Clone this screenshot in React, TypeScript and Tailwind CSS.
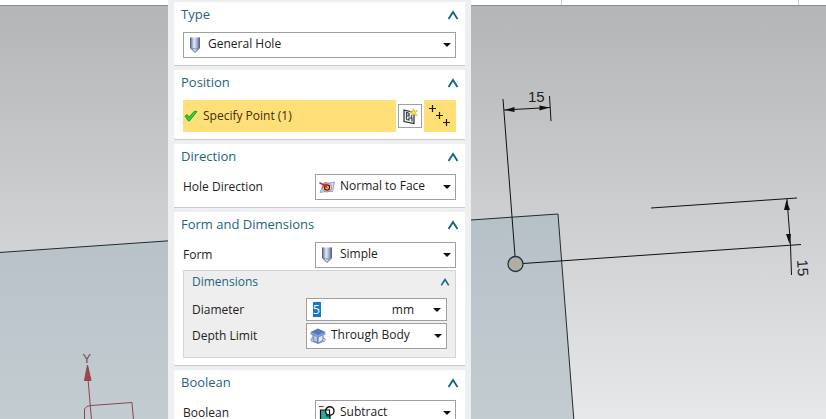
import type { ReactNode } from "react";

type IconProps = { className?: string };

function HoleIcon() {
  return (
    <svg width="16" height="18" viewBox="0 0 16 18">
      <defs>
        <linearGradient id="hole" x1="0" x2="1" y1="0" y2="0">
          <stop offset="0" stopColor="#5f6c9c" />
          <stop offset="0.4" stopColor="#e6ebf7" />
          <stop offset="0.7" stopColor="#a5b2d6" />
          <stop offset="1" stopColor="#56628f" />
        </linearGradient>
      </defs>
      <path d="M3.5 1.5 V12 L8 16.5 L12.5 12 V1.5 Z" fill="url(#hole)" />
      <path d="M3.5 1.5 V12 L8 16.5 L12.5 12 V1.5" fill="none" stroke="#5d6789" />
      <path d="M4 12 Q8 14 12 12" fill="none" stroke="#8490b4" />
    </svg>
  );
}

function NormalFaceIcon() {
  return (
    <svg width="16" height="16" viewBox="0 0 16 16">
      <path d="M5 3.5 Q10 5 15.5 3 L13.5 12.5 Q8 11.5 1 13.5 Z" fill="#c9d9f7" stroke="#8fa3d6" />
      <circle cx="8" cy="8.500" r="4.400" fill="#fff" stroke="#d9605c" />
      <circle cx="8" cy="8.500" r="2.600" fill="#f2d32c" stroke="#1c1c1c" strokeWidth="1.200" />
      <path d="M0.500 3.800 L6 6.500" stroke="#d6202b" strokeWidth="1.800" />
      <path d="M8.800 9 L3.800 8.200 L6.400 4.200 Z" fill="#d6202b" />
    </svg>
  );
}

function ThroughBodyIcon() {
  return (
    <svg width="16" height="16" viewBox="0 0 16 16">
      <path d="M3 6 L8 8.500 V15 L3 12.500 Z" fill="#b4c3e6" stroke="#5c72ae" />
      <path d="M13 6 L8 8.500 V15 L13 12.500 Z" fill="#e3ebfa" stroke="#5c72ae" />
      <path d="M0.500 4 L8 0.500 L15.500 4 L8 7.500 Z" fill="#5878c0" />
      <path d="M0.500 4 V6.500 L8 9.500 L15.500 6.500 V4 L8 7.500 Z" fill="#7f97d0" />
      <path d="M1 10.500 L3 9.500 M15 10.500 L13 9.500 M1 10.500 V13 L8 15.500 L15 13 V10.500" fill="none" stroke="#7f94c8" />
    </svg>
  );
}

function SubtractIcon() {
  return (
    <svg width="16" height="16" viewBox="0 0 16 16">
      <path d="M1.500 5 H8 V11 H11 V16 H1.500 Z" fill="#2ea996" stroke="#111" strokeWidth="1.200" />
      <circle cx="10.800" cy="6" r="4.200" fill="#fff" stroke="#111" strokeWidth="1.400" />
      <path d="M6.600 5 H10.500 V10" fill="none" stroke="#111" strokeWidth="1.200" />
      <path d="M0 1.500 H4.500" stroke="#c3242d" strokeWidth="1.200" />
    </svg>
  );
}

function SketchIcon() {
  return (
    <svg width="18" height="18" viewBox="0 0 18 18">
      <path d="M3 3 L13 5.500 V16.500 L3 14.500 Z" fill="#f1f4f7" stroke="#262c32" strokeWidth="1.200" />
      <path d="M5.500 12.500 V5.500 L8 6.500 V9 L5.500 8.500 M5.500 12.500 L8 13 V11 H11 V14.500 M10.500 8 V11" fill="none" stroke="#394149" strokeWidth="1.200" />
      <path d="M12.500 1.500 L13.400 4.100 L16.500 3.600 L14.500 5.800 L16 8.500 L13 7.300 L10.600 9.200 L11.200 6.300 L8.800 4.800 L11.600 4.200 Z" fill="#f4e842" stroke="#b3a83a" strokeWidth="0.600" />
    </svg>
  );
}

function PointsIcon() {
  return (
    <svg width="32" height="32" viewBox="0 0 32 32">
      <path d="M5 8.500 h7 M8.500 5 v7 M12 15.500 h7 M15.500 12 v7 M19 22.500 h7 M22.500 19 v7" stroke="#1b1608" strokeWidth="1.200" />
    </svg>
  );
}

function CheckIcon() {
  return (
    <svg width="14" height="12" viewBox="0 0 14 12">
      <path d="M1 6.200 L3.200 4.600 L5 7 L10.600 1 L13 1.600 L5.400 11 L4.400 11 Z" fill="#2bd136" stroke="#118c1c" strokeWidth="0.800" />
    </svg>
  );
}

function Chevron({ className }: IconProps) {
  return (
    <svg className={className} width="12" height="10" viewBox="0 0 12 10">
      <path d="M1.500 9 L6 2 L10.500 9" fill="none" stroke="#17677f" strokeWidth="1.900" />
    </svg>
  );
}

function Arrow() {
  return (
    <svg className="pointer-events-none absolute top-1/2 right-[5px] -translate-y-1/2" width="8" height="4" viewBox="0 0 8 4">
      <path d="M0 0 H8 L4 4 Z" fill="#111" />
    </svg>
  );
}

function Picker({ id, label, value, icon, wide }: { id: string; label?: string; value: string; icon: ReactNode; wide?: boolean }) {
  return (
    <div className={wide ? "relative h-[26px] w-full" : "relative h-[26px] w-[141px] shrink-0"}>
      <span className="pointer-events-none absolute inset-y-0 left-1 flex items-center">{icon}</span>
      <select
        id={id}
        aria-label={label}
        defaultValue={value}
        className="block h-full w-full appearance-none border border-[#a0a0a0] bg-transparent pb-[2px] pl-6 text-xs text-[#222]"
      >
        <option>{value}</option>
      </select>
      <Arrow />
    </div>
  );
}

function Section({ title, children }: { title: string; children: ReactNode }) {
  return (
    <section className="border-b border-[#cbcbcb] bg-white px-[9px] pb-[7px]">
      <h2 className="mb-[6px] -ml-[2px]">
        <button type="button" className="flex h-6 w-full items-center justify-between pt-px text-[13px] text-[#1f6480]">
          {title}
          <Chevron className="-mr-[3px]" />
        </button>
      </h2>
      {children}
    </section>
  );
}

function Row({ id, label, children }: { id: string; label: string; children: ReactNode }) {
  return (
    <div className="flex items-center justify-between text-xs text-[#222]">
      <label htmlFor={id} className="leading-3">{label}</label>
      {children}
    </div>
  );
}

function Model() {
  return (
    <svg className="absolute inset-0 h-full w-full" viewBox="0 6 826 413" preserveAspectRatio="xMinYMin slice">
      <defs>
        <linearGradient id="face" x1="0" x2="0" y1="0" y2="1">
          <stop offset="0" stopColor="#b6c1c7" />
          <stop offset="0.500" stopColor="#bdc6cc" />
          <stop offset="1" stopColor="#c3ccd0" />
        </linearGradient>
      </defs>
      <path d="M-2 252.600 L558 214 L574 422 H-2 Z" fill="url(#face)" stroke="#222b30" />
      <g stroke="#111" fill="#111">
        <path d="M503 99 L515 256 M549.500 96 L551 121 M504 110 L550 107.500 M523 263.500 L801 244.500 M651 208 L797 198 M787 199 L790.500 245 L791.500 275" fill="none" />
        <path d="M504.500 110 l10 -3 v5 Z M549.500 107.500 l-10 -2 v5 Z M786.500 200 l-2.500 10 h6 Z M789.500 244 l-3.500 -10 h5 Z" stroke="none" />
      </g>
      <circle cx="515.500" cy="264" r="7.500" fill="#a9b0b0" stroke="#25343c" strokeWidth="1.300" />
      <path d="M515.500 258 v12 M510 264 h11" stroke="#c9a66a" strokeWidth="1.200" />
      <g className="font-['Liberation_Sans',Arial,sans-serif] text-[15px]" fill="#222">
        <text x="528" y="102">15</text>
        <text transform="translate(797 260) rotate(86)">15</text>
      </g>
      <g stroke="#8c4650" fill="none">
        <path d="M88 379 L91.500 420 M84.500 420 V409 Q86 405.500 91 405.500 L132 402.500 L133.500 420" />
        <path d="M87.500 365 L84.500 380.500 H91 Z" fill="#a2434c" />
      </g>
      <text x="82.500" y="363" className="font-['Liberation_Sans',Arial,sans-serif] text-[13px]" fill="#7c4a50">Y</text>
    </svg>
  );
}

export default function App() {
  return (
    <main className="relative flex h-screen flex-col overflow-hidden font-['Open_Sans','Segoe_UI',sans-serif]">
      <div className="flex h-[6px] shrink-0 justify-end border-b border-[#8b8c8d] bg-white">
        <div className="mr-[27px] w-[238px] border-x border-[#c9cbce]" />
      </div>
      <div className="relative flex-1 bg-linear-to-b from-[#b4b5b7] to-[#e7e8ea]">
        <Model />
      </div>
      <form className="absolute top-0 left-[168px] flex w-[303px] flex-col gap-1 bg-[#eeeff0] px-[6px] pt-[2px]">
        <Section title="Type">
          <Picker id="type" label="Type" value="General Hole" icon={<HoleIcon />} wide />
        </Section>
        <Section title="Position">
          <div className="flex items-center gap-[2px]">
            <button type="button" className="flex h-8 flex-1 items-center gap-[5px] bg-[#ffdf78] pl-[1px] text-xs text-[#3a2c10]">
              <CheckIcon />
              Specify Point (1)
            </button>
            <button type="button" aria-label="Sketch Section" className="flex size-6 items-center justify-center border border-[#a0a0a0] bg-white">
              <SketchIcon />
            </button>
            <button type="button" aria-label="Point Dialog" className="size-8 bg-[#ffdf78]">
              <PointsIcon />
            </button>
          </div>
        </Section>
        <Section title="Direction">
          <Row id="direction" label="Hole Direction">
            <Picker id="direction" value="Normal to Face" icon={<NormalFaceIcon />} />
          </Row>
        </Section>
        <Section title="Form and Dimensions">
          <Row id="form" label="Form">
            <Picker id="form" value="Simple" icon={<HoleIcon />} />
          </Row>
          <div className="mt-[2px] border border-[#d4d4d4] bg-[#eeeeee] px-2 pb-2">
            <h3 className="mb-[6px]">
              <button type="button" className="flex h-[21px] w-full items-center justify-between text-xs text-[#1f6480]">
                Dimensions
                <Chevron className="-mr-[3px] w-[10px]" />
              </button>
            </h3>
            <div className="flex flex-col gap-[2px]">
              <Row id="diameter" label="Diameter">
                <div className="relative flex h-[23px] w-[141px] items-center border border-[#a0a0a0] bg-white pl-[6px]">
                  <input id="diameter" defaultValue="5" className="h-[15px] w-2 bg-[#1177d1] text-xs text-white" />
                  <span className="ml-auto pr-8">mm</span>
                  <Arrow />
                </div>
              </Row>
              <Row id="depth" label="Depth Limit">
                <div className="bg-white">
                  <Picker id="depth" value="Through Body" icon={<ThroughBodyIcon />} />
                </div>
              </Row>
            </div>
          </div>
        </Section>
        <Section title="Boolean">
          <Row id="boolean" label="Boolean">
            <Picker id="boolean" value="Subtract" icon={<SubtractIcon />} />
          </Row>
        </Section>
      </form>
    </main>
  );
}
